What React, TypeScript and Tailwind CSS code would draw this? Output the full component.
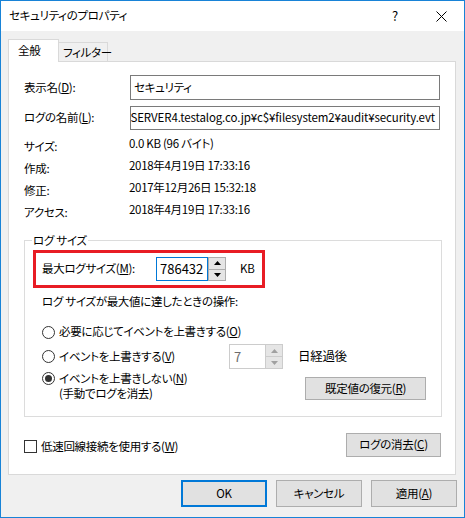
import React from 'react'

function Arrow({ up, color = '#000' }: { up?: boolean; color?: string }) {
  return (
    <svg width="7" height="4" viewBox="0 0 7 4">
      {up ? <path d="M0 4 L3.5 0 L7 4 Z" fill={color} /> : <path d="M0 0 L3.5 4 L7 0 Z" fill={color} />}
    </svg>
  )
}

function Spinner({ disabled }: { disabled?: boolean }) {
  const border = disabled ? 'border-[#cccccc]' : 'border-[#adadad]'
  const color = disabled ? '#a0a0a0' : '#000'
  return (
    <div className={`flex flex-col w-[18px] h-full border ${border} bg-[#e5e5e5]`}>
      <div className={`flex-1 flex items-center justify-center border-b ${border}`}>
        <Arrow up color={color} />
      </div>
      <div className="flex-1 flex items-center justify-center">
        <Arrow color={color} />
      </div>
    </div>
  )
}

function Radio({ checked }: { checked?: boolean }) {
  return (
    <div className="w-[13px] h-[13px] rounded-full border border-[#333] bg-white flex items-center justify-center shrink-0">
      {checked && <div className="w-[7px] h-[7px] rounded-full bg-[#333]" />}
    </div>
  )
}

function Btn({ children, className = '' }: { children: React.ReactNode; className?: string }) {
  return (
    <div className={`flex items-center justify-center bg-[#e1e1e1] border border-[#adadad] whitespace-nowrap ${className}`}>
      {children}
    </div>
  )
}

export default function App() {
  const infoRows = [
    { label: 'サイズ:', value: '0.0 KB (96 バイト)' },
    { label: '作成:', value: '2018年4月19日 17:33:16' },
    { label: '修正:', value: '2017年12月26日 15:32:18' },
    { label: 'アクセス:', value: '2018年4月19日 17:33:16' },
  ]

  return (
    <div className="w-[465px] h-[518px] border border-[#1883d7] bg-[#f0f0f0] text-[11.5px] tracking-[-0.3px] text-black overflow-hidden font-['Noto_Sans_CJK_JP','Noto_Sans',sans-serif] [font-feature-settings:'palt'] whitespace-nowrap">
      {/* Title bar */}
      <div className="h-[30px] bg-white flex items-center">
        <span className="pl-[8px] flex-1">セキュリティのプロパティ</span>
        <div className="w-[46px] h-full flex items-center justify-center text-[13px]">?</div>
        <div className="w-[46px] h-full flex items-center justify-center">
          <svg width="11" height="11" viewBox="0 0 11 11">
            <path d="M0.5 0.5 L10.5 10.5 M10.5 0.5 L0.5 10.5" stroke="#000" strokeWidth="1" />
          </svg>
        </div>
      </div>

      {/* Tabs */}
      <div className="mt-[8px] ml-[7px] flex items-end h-[22px]">
        <div className="relative z-10 w-[51px] h-[23px] -mb-[1px] bg-white border border-b-0 border-[#d9d9d9] pl-[9px] pt-[2px]">
          全般
        </div>
        <div className="w-[49px] h-[19px] border border-l-0 border-b-0 border-[#d9d9d9] pl-[4px] leading-[19px]">
          フィルター
        </div>
      </div>

      {/* Panel */}
      <div className="ml-[7px] w-[448px] h-[414px] bg-white border border-[#d9d9d9] pl-[15px]">
        <div className="mt-[13px] flex items-center h-[25px]">
          <span className="w-[106px]">
            表示名(<u>D</u>):
          </span>
          <div className="w-[310px] h-full border border-[#7a7a7a] flex items-center pl-[3px]">セキュリティ</div>
        </div>
        <div className="mt-[6px] flex items-center h-[24px]">
          <span className="w-[106px]">
            ログの名前(<u>L</u>):
          </span>
          <div className="w-[310px] h-full border border-[#7a7a7a] flex items-center justify-end pr-[4px] overflow-hidden">
            <span className="shrink-0 tracking-[-0.12px]">\\SERVER4.testalog.co.jp¥c$¥filesystem2¥audit¥security.evt</span>
          </div>
        </div>

        <div className="mt-[3px]">
          {infoRows.map((row) => (
            <div key={row.label} className="flex items-center h-[22px]">
              <span className="w-[105px] mt-[6px]">{row.label}</span>
              <span>{row.value}</span>
            </div>
          ))}
        </div>

        {/* Log size group */}
        <div className="mt-[19px] w-[418px] h-[177px] border border-[#dcdcdc]">
          <div className="-mt-[9px] ml-[7px] px-[1px] w-fit bg-white leading-[16px]">ログ サイズ</div>

          <div className="mt-[2px] ml-[8px] w-[232px] h-[38px] border-[3px] border-[#e81c24] flex items-center pl-[6px]">
            <span className="w-[114px]">
              最大ログサイズ(<u>M</u>):
            </span>
            <div className="flex h-[24px]">
              <div className="w-[52px] h-full border border-[#0078d7] flex items-center pl-[3px] text-[13px] tracking-normal">786432</div>
              <Spinner />
            </div>
            <span className="ml-[14px]">KB</span>
          </div>

          <div className="mt-[5px] ml-[17px] leading-[16px]">ログ サイズが最大値に達したときの操作:</div>

          <div className="mt-[13px] ml-[17px] h-[20px] flex items-center">
            <Radio />
            <span className="ml-[4px]">
              必要に応じてイベントを上書きする(<u>O</u>)
            </span>
          </div>

          <div className="mt-[2px] ml-[17px] h-[25px] flex items-center">
            <div className="w-[187px] flex items-center">
              <Radio />
              <span className="ml-[4px]">
                イベントを上書きする(<u>V</u>)
              </span>
            </div>
            <div className="flex h-full">
              <div className="w-[36px] h-full border border-r-0 border-[#cccccc] flex items-center pl-[4px] text-[13px] text-[#6d6d6d]">
                7
              </div>
              <Spinner disabled />
            </div>
            <span className="ml-[15px] text-[12.5px]">日経過後</span>
          </div>

          <div className="mt-[2px] ml-[17px] flex">
            <div className="flex-1 flex items-start leading-[15px]">
              <div className="mt-[1px]">
                <Radio checked />
              </div>
              <div className="ml-[4px]">
                <div>
                  イベントを上書きしない(<u>N</u>)
                </div>
                <div>(手動でログを消去)</div>
              </div>
            </div>
            <Btn className="mt-[6px] mr-[15px] w-[121px] h-[23px]">
              既定値の復元(<u>R</u>)
            </Btn>
          </div>
        </div>

        {/* Checkbox + clear */}
        <div className="mt-[16px] flex items-start w-[417px]">
          <div className="flex items-center mt-[5px]">
            <div className="w-[13px] h-[13px] border border-[#333] bg-white" />
            <span className="ml-[4px]">
              低速回線接続を使用する(<u>W</u>)
            </span>
          </div>
          <Btn className="ml-auto w-[95px] h-[24px]">
            ログの消去(<u>C</u>)
          </Btn>
        </div>
      </div>

      {/* Bottom buttons */}
      <div className="mt-[5px] flex justify-end gap-[9px] pr-[7px]">
        <div className="w-[86px] h-[27px] flex items-center justify-center bg-[#e1e1e1] border-2 border-[#0078d7]">OK</div>
        <Btn className="w-[86px] h-[27px]">キャンセル</Btn>
        <Btn className="w-[86px] h-[27px]">
          適用(<u>A</u>)
        </Btn>
      </div>
    </div>
  )
}
